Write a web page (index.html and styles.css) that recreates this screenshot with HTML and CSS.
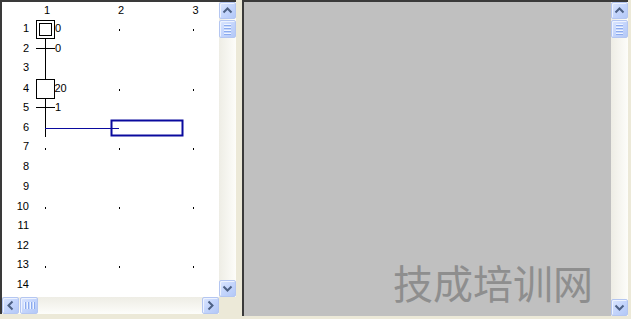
FILE: index.html
```html
<!DOCTYPE html>
<html>
<head>
<meta charset="utf-8">
<link rel="stylesheet" href="styles.css">
</head>
<body>
<div class="app">
  <div class="pane left">
    <div class="canvas sfc">
      <svg class="diagram" width="217" height="295" viewBox="2 2 217 295">
        <g class="hdr">
          <text x="47" y="14">1</text>
          <text x="121" y="14">2</text>
          <text x="195.5" y="14">3</text>
        </g>
        <g class="rows">
          <text x="29" y="32">1</text>
          <text x="29" y="52">2</text>
          <text x="29" y="71">3</text>
          <text x="29" y="92">4</text>
          <text x="29" y="111">5</text>
          <text x="29" y="131">6</text>
          <text x="29" y="150">7</text>
          <text x="29" y="170">8</text>
          <text x="29" y="190">9</text>
          <text x="29" y="210">10</text>
          <text x="29" y="229">11</text>
          <text x="29" y="249">12</text>
          <text x="29" y="268">13</text>
          <text x="29" y="288">14</text>
        </g>
        <g class="dots">
          <rect x="119" y="29" width="1" height="2"/>
          <rect x="193" y="29" width="1" height="2"/>
          <rect x="119" y="89" width="1" height="2"/>
          <rect x="193" y="89" width="1" height="2"/>
          <rect x="45" y="148" width="1" height="2"/>
          <rect x="119" y="148" width="1" height="2"/>
          <rect x="193" y="148" width="1" height="2"/>
          <rect x="45" y="207" width="1" height="2"/>
          <rect x="119" y="207" width="1" height="2"/>
          <rect x="193" y="207" width="1" height="2"/>
          <rect x="45" y="266" width="1" height="2"/>
          <rect x="119" y="266" width="1" height="2"/>
          <rect x="193" y="266" width="1" height="2"/>
        </g>
        <g class="chain">
          <line x1="45.5" y1="38" x2="45.5" y2="80"/>
          <line x1="45.5" y1="98" x2="45.5" y2="137"/>
          <rect x="36.5" y="20.5" width="18" height="18"/>
          <rect x="39.5" y="23.5" width="12" height="12"/>
          <line x1="36" y1="48.5" x2="55" y2="48.5"/>
          <rect x="36.5" y="79.5" width="18" height="19"/>
          <line x1="36" y1="107.5" x2="55" y2="107.5"/>
        </g>
        <g class="labels">
          <text x="55" y="32">0</text>
          <text x="55" y="52">0</text>
          <text x="54.5" y="92">20</text>
          <text x="55" y="111">1</text>
        </g>
        <g class="cursor">
          <line x1="45" y1="128.5" x2="119" y2="128.5"/>
          <rect x="111.5" y="120.5" width="71" height="15"/>
        </g>
      </svg>
    </div>
    <div class="vscroll">
      <div class="btn up"><svg width="15" height="15" viewBox="0 0 15 15"><polyline points="3.5,9.5 7.5,5.5 11.5,9.5"/></svg></div>
      <div class="thumb v"><span></span><span></span><span></span><span></span></div>
      <div class="track"></div>
      <div class="btn down"><svg width="15" height="15" viewBox="0 0 15 15"><polyline points="3.5,5.5 7.5,9.5 11.5,5.5"/></svg></div>
    </div>
    <div class="hscroll">
      <div class="btn left-btn"><svg width="15" height="15" viewBox="0 0 15 15"><polyline points="9.5,3.5 5.5,7.5 9.5,11.5"/></svg></div>
      <div class="thumb h"><span></span><span></span><span></span><span></span></div>
      <div class="track"></div>
      <div class="btn right-btn"><svg width="15" height="15" viewBox="0 0 15 15"><polyline points="5.5,3.5 9.5,7.5 5.5,11.5"/></svg></div>
    </div>
    <div class="corner"></div>
  </div>
  <div class="pane right">
    <div class="canvas gray">
      <div class="watermark">技成培训网</div>
    </div>
    <div class="vscroll">
      <div class="btn up"><svg width="15" height="15" viewBox="0 0 15 15"><polyline points="3.5,9.5 7.5,5.5 11.5,9.5"/></svg></div>
      <div class="thumb v"><span></span><span></span><span></span><span></span></div>
      <div class="track"></div>
      <div class="btn down"><svg width="15" height="15" viewBox="0 0 15 15"><polyline points="3.5,5.5 7.5,9.5 11.5,5.5"/></svg></div>
    </div>
  </div>
</div>
</body>
</html>
```
FILE: styles.css
```css
html, body {
  margin: 0;
  padding: 0;
}
body {
  width: 631px;
  height: 319px;
  overflow: hidden;
  background: #ece9d8;
  font-family: "Liberation Sans", Arial, sans-serif;
}
.app {
  display: flex;
  align-items: flex-start;
  gap: 6px;
  height: 319px;
}
.pane {
  box-sizing: border-box;
  border-top: 2px solid #3a3a3a;
  border-left: 2px solid #3a3a3a;
}
.left {
  width: 236px;
  height: 314px;
  display: grid;
  grid-template-columns: 217px 17px;
  grid-template-rows: 295px 17px;
}
.right {
  width: 386px;
  height: 316px;
  display: flex;
}
.canvas.sfc {
  background: #fff;
  overflow: hidden;
}
.diagram {
  display: block;
}
.diagram text {
  font-family: "Liberation Sans", Arial, sans-serif;
  font-size: 11px;
  fill: #000;
}
.hdr text {
  text-anchor: middle;
}
.rows text {
  text-anchor: end;
}
.dots rect {
  fill: #000;
}
.chain line, .chain rect {
  stroke: #000;
  stroke-width: 1;
  fill: none;
}
.chain rect {
  fill: #fff;
}
.cursor line {
  stroke: #0a0a9e;
  stroke-width: 1;
}
.cursor rect {
  stroke: #0a0a9e;
  stroke-width: 2;
  fill: none;
}
.canvas.gray {
  flex: 1;
  background: #c0c0c0;
  position: relative;
  overflow: hidden;
}
.watermark {
  position: absolute;
  left: 149px;
  top: 258px;
  font-family: "Noto Sans CJK SC", sans-serif;
  font-size: 40px;
  line-height: 44px;
  color: #8e8e8e;
  white-space: nowrap;
}
.vscroll {
  width: 17px;
  display: flex;
  flex-direction: column;
  background: linear-gradient(to right, #eeede5, #fdfdfa);
}
.right .vscroll {
  height: 314px;
}
.hscroll {
  height: 17px;
  display: flex;
  background: linear-gradient(to bottom, #eeede5, #fdfdfa);
}
.track {
  flex: 1;
}
.btn, .thumb {
  box-sizing: border-box;
  width: 17px;
  height: 17px;
  flex: none;
  border: 1px solid #b4c6f1;
  border-radius: 2px;
  background: linear-gradient(135deg, #dbe6fe 0%, #c4d5fc 50%, #b3c8f7 100%);
  box-shadow: inset 1px 1px 0 #eef3fe;
}
.btn svg {
  display: block;
}
.btn polyline {
  fill: none;
  stroke: #4d6185;
  stroke-width: 2;
}
.thumb.v {
  height: 18px;
  margin-top: 1px;
  display: flex;
  flex-direction: column;
  align-items: center;
  justify-content: center;
  gap: 1px;
}
.thumb.v span {
  width: 7px;
  height: 1px;
  background: #eef4fe;
  border-bottom: 1px solid #8cabee;
}
.thumb.h {
  width: 18px;
  margin-left: 1px;
  display: flex;
  align-items: center;
  justify-content: center;
  gap: 1px;
}
.thumb.h span {
  width: 1px;
  height: 7px;
  background: #eef4fe;
  border-right: 1px solid #8cabee;
}
.corner {
  background: #ece9d8;
}
```
